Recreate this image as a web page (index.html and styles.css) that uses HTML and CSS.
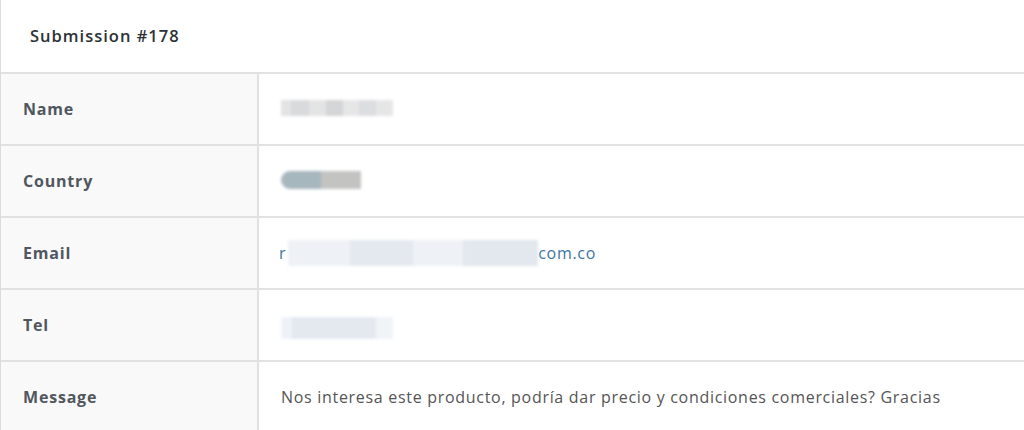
FILE: index.html
```html
<!DOCTYPE html>
<html>
<head>
<meta charset="utf-8">
<link rel="stylesheet" href="styles.css">
</head>
<body>
<div class="panel">
  <div class="panel-head">Submission #178</div>
  <div class="table">
    <div class="row">
      <div class="label">Name</div>
      <div class="value"><span class="blur blur-name"></span></div>
    </div>
    <div class="row">
      <div class="label">Country</div>
      <div class="value"><span class="blur blur-country"><i class="c1"></i><i class="c2"></i></span></div>
    </div>
    <div class="row">
      <div class="label">Email</div>
      <div class="value"><a class="email" href="#"><span class="email-r">r</span><span class="blur blur-email"></span>com.co</a></div>
    </div>
    <div class="row">
      <div class="label">Tel</div>
      <div class="value"><span class="blur blur-tel"></span></div>
    </div>
    <div class="row">
      <div class="label">Message</div>
      <div class="value msg">Nos interesa este producto, podría dar precio y condiciones comerciales? Gracias</div>
    </div>
  </div>
</div>
</body>
</html>
```
FILE: styles.css
```css
html, body {
  margin: 0;
  padding: 0;
  background: #ffffff;
}
body {
  font-family: "Open Sans", "Noto Sans", sans-serif;
  color: #555;
  overflow: hidden;
}
.panel {
  border-left: 1px solid #dcdcde;
  width: 1040px;
}
.panel-head {
  height: 74px;
  box-sizing: border-box;
  padding-left: 29px;
  padding-bottom: 2px;
  display: flex;
  align-items: center;
  font-size: 16.5px;
  font-weight: 600;
  letter-spacing: 1px;
  color: #2c3136;
  border-bottom: 2px solid #e1e1e3;
}
.table {
  display: flex;
  flex-direction: column;
}
.row {
  display: grid;
  grid-template-columns: 258px 1fr;
  height: 72px;
  border-bottom: 2px solid #e1e1e3;
  box-sizing: border-box;
}
.label {
  background: #f9f9f9;
  border-right: 2px solid #e1e1e3;
  display: flex;
  align-items: center;
  padding-left: 22px;
  font-size: 16px;
  font-weight: 700;
  letter-spacing: 0.8px;
  color: #50575e;
}
.value {
  display: flex;
  align-items: center;
  padding-left: 22px;
  font-size: 16px;
  letter-spacing: 0.7px;
  color: #555;
}
.blur {
  display: inline-block;
  filter: blur(1.5px);
}
.blur-name {
  width: 112px;
  height: 16px;
  margin-top: -2px;
  background: linear-gradient(90deg, #e3e3e4 0 9%, #d9dadc 9% 25%, #e4e4e5 25% 40%, #d4d5d7 40% 55%, #e6e6e7 55% 70%, #dcdde0 70% 85%, #e6e6e7 85%);
}
.blur-country {
  display: inline-flex;
  width: 80px;
  height: 18px;
  border-radius: 9px 0 0 9px;
  overflow: hidden;
  margin-top: -2px;
}
.blur-country i {
  display: block;
  height: 100%;
}
.blur-country .c1 { width: 40px; background: #a7b7be; }
.blur-country .c2 { width: 40px; background: #c3c4c2; }
.email {
  color: #3c74a6;
  text-decoration: none;
  display: inline-flex;
  align-items: center;
}
.email-r {
  margin-left: -2px;
}
.blur-email {
  width: 250px;
  height: 26px;
  margin: 0 0 0 2px;
  background: linear-gradient(90deg, #eef1f5 0 25%, #e4e9ef 25% 50%, #eef1f5 50% 70%, #e2e8ee 70% 100%);
}
.blur-tel {
  width: 112px;
  height: 22px;
  margin-top: 6px;
  background: linear-gradient(90deg, #eef2f6 0 10%, #e4e9ef 10% 85%, #f1f4f7 85%);
}
.msg {
  color: #555;
}
```
